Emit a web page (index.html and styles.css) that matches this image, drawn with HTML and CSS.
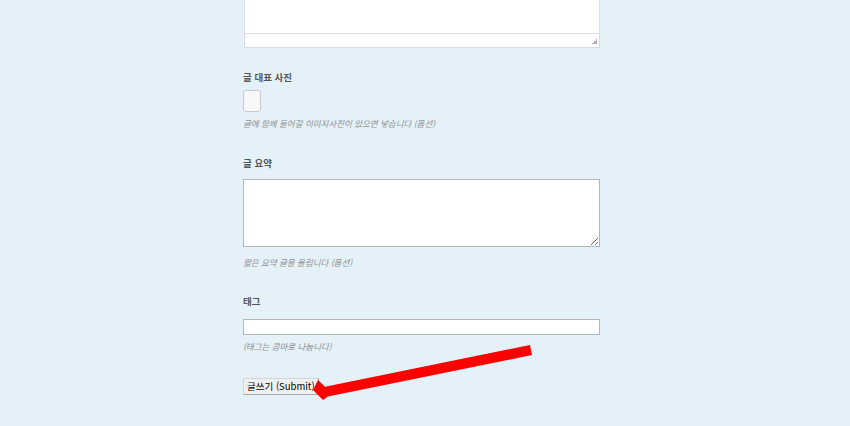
FILE: index.html
```html
<!DOCTYPE html>
<html lang="ko">
<head>
    <meta charset="UTF-8">
    <title>글쓰기</title>
    <link rel="stylesheet" href="styles.css">
</head>
<body>
    <div class="container">
        <div class="editor">
            <div class="editor-body"></div>
            <div class="editor-status"><span class="grip"></span></div>
        </div>

        <div class="field field-photo">
            <label class="field-label">글 대표 사진</label>
            <div class="file-btn"></div>
            <p class="help">글에 함께 들어갈 이미지사진이 있으면 넣습니다 (옵션)</p>
        </div>

        <div class="field field-summary">
            <label class="field-label">글 요약</label>
            <textarea class="summary"></textarea>
            <p class="help">짧은 요약 글을 올립니다 (옵션)</p>
        </div>

        <div class="field field-tags">
            <label class="field-label">태그</label>
            <input type="text" class="tags">
            <p class="help">(태그는 콤마로 나눕니다)</p>
        </div>

        <button class="submit-btn">글쓰기 (Submit)</button>
    </div>

    <svg class="arrow" width="850" height="426" viewBox="0 0 850 426">
        <polygon points="530,345 532,355 328,396.5 323,400 313,390 318,380 325,386.8" fill="#ff0000"/>
    </svg>
</body>
</html>
```

FILE: styles.css
```css
body {
    margin: 0;
    padding: 0;
    background-color: #e4f1f8;
    font-family: "Noto Sans CJK KR", "Noto Sans", sans-serif;
    color: #555;
    height: 426px;
    overflow: hidden;
}
.container {
    width: 358px;
    margin-left: 243px;
}
.editor {
    margin-left: 1px;
    width: 354px;
    border: 1px solid #dcdcdc;
    border-top: none;
    background: #fff;
}
.editor-body {
    height: 33px;
    border-bottom: 1px solid #dedede;
}
.editor-status {
    height: 13px;
    position: relative;
}
.grip {
    position: absolute;
    right: 2px;
    bottom: 3px;
    width: 5px;
    height: 5px;
    background: linear-gradient(135deg, transparent 50%, #b8a8c8 50%);
}
.field-label {
    display: block;
    font-size: 9.5px;
    font-weight: bold;
    color: #555;
    line-height: 12px;
}
.help {
    font-size: 8.5px;
    font-style: italic;
    color: #8f8f8f;
    line-height: 12px;
    margin: 0;
}

/* 대표 사진 */
.field-photo {
    margin-top: 23px;
}
.field-photo .field-label {
    margin-bottom: 7px;
}
.field-photo .help {
    margin-top: 5px;
}
.file-btn {
    width: 16px;
    height: 20px;
    border: 1px solid #c8c8c8;
    border-radius: 3px;
    background: #f7f7f7;
}

/* 요약 */
.field-summary {
    margin-top: 28px;
}
.field-summary .field-label {
    margin-bottom: 10px;
}
.field-summary .help {
    margin-top: 9px;
}
.summary {
    display: block;
    box-sizing: border-box;
    width: 357px;
    height: 68px;
    margin: 0;
    border: 1px solid #b5b5b5;
    background: #fff;
}

/* 태그 */
.field-tags {
    margin-top: 27px;
}
.field-tags .field-label {
    margin-bottom: 12px;
}
.field-tags .help {
    margin-top: 5px;
}
.tags {
    display: block;
    box-sizing: border-box;
    width: 357px;
    height: 16px;
    margin: 0;
    padding: 0;
    border: 1px solid #b5b5b5;
    background: #fff;
}

.submit-btn {
    margin-top: 26px;
    height: 17px;
    padding: 0 3px;
    font-family: "Noto Sans CJK KR", "Noto Sans", sans-serif;
    font-size: 9.5px;
    line-height: 15px;
    color: #000;
    background: #f0f0f0;
    border: 1px solid #d4d4d4;
    border-right-color: #a8a8a8;
    border-bottom-color: #a8a8a8;
    border-radius: 0;
}
.arrow {
    position: absolute;
    top: 0;
    left: 0;
    pointer-events: none;
}
```
